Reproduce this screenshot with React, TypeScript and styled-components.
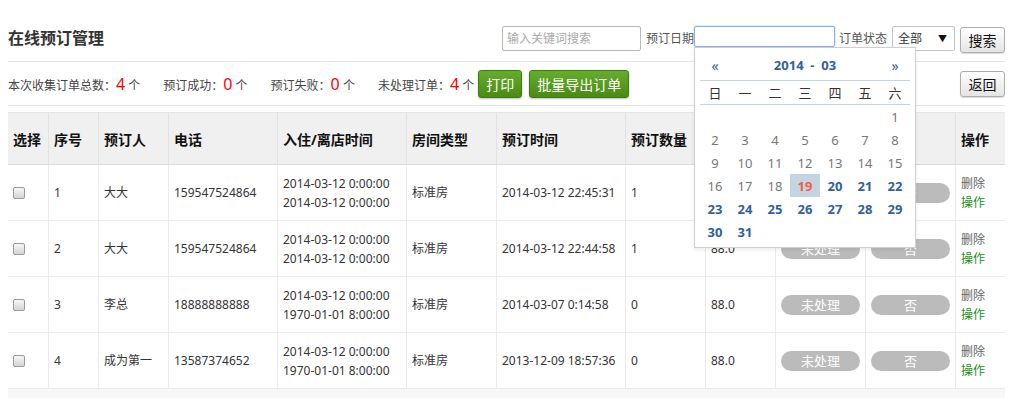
import React from "react";
import styled, {createGlobalStyle} from "styled-components";

const GlobalStyle = createGlobalStyle`
  * { box-sizing: border-box; }
  body {
    margin: 0;
    background: #fff;
    color: #333;
    font-family: "Noto Sans", "Noto Sans CJK SC", sans-serif;
    font-size: 12px;
  }
`;

const Page = styled.div`
  width: 997px;
  margin-left: 8px;
`;

const TopBar = styled.div`
  display: flex;
  align-items: flex-start;
  height: 62px;
  padding-top: 26px;
  border-bottom: 1px solid #e6e6e6;
`;

const Title = styled.h1`
  margin: 0 auto 0 0;
  font-size: 16px;
  line-height: 25px;
  font-weight: bold;
  color: #333;
`;

const SearchInput = styled.input`
  width: 139px;
  height: 25px;
  padding: 0 4px;
  border: 1px solid #b9b9b9;
  border-radius: 2px;
  font: inherit;
  font-size: 12px;
  &::placeholder { color: #a9a9a9; }
`;

const Label = styled.span<{ $gap: number }>`
  margin-left: ${p => p.$gap}px;
  line-height: 25px;
  color: #555;
  white-space: nowrap;
`;

const DateField = styled.div`
  position: relative;
`;

const DateInput = styled.input`
  display: block;
  width: 141px;
  height: 21px;
  border: 1px solid #86aee8;
  border-radius: 2px;
  outline: none;
  box-shadow: 0 0 2px rgba(82, 136, 220, 0.5);
`;

const SelectBox = styled.div`
  position: relative;
  margin-left: 5px;
`;

const StatusSelect = styled.select`
  appearance: none;
  width: 63px;
  height: 25px;
  padding: 0 5px;
  border: 1px solid #c4c4c4;
  border-radius: 2px;
  background: #fff;
  font: inherit;
  font-size: 12px;
  color: #333;
`;

const Arrow = styled.span`
  position: absolute;
  right: 8px;
  top: 6px;
  font-size: 9px;
  color: #111;
  pointer-events: none;
`;

const GreyButton = styled.button<{ $top?: number }>`
  margin-left: ${p => (p.$top ? 5 : 0)}px;
  margin-top: ${p => p.$top ?? 0}px;
  width: 45px;
  height: 26px;
  padding: 0;
  border: 1px solid #adadad;
  border-radius: 3px;
  background: linear-gradient(#ffffff, #e4e4e4);
  box-shadow: 0 1px 1px rgba(0, 0, 0, 0.15);
  font-family: inherit;
  font-size: 14px;
  color: #111;
`;

const StatsBar = styled.div`
  display: flex;
  align-items: center;
  height: 44px;
  border-bottom: 1px solid #e6e6e6;
`;

const Stat = styled.span`
  margin-right: 23px;
  color: #444;
  white-space: nowrap;
  &:last-of-type { margin-right: 4px; }
`;

const Num = styled.em`
  font-style: normal;
  font-size: 16px;
  color: #f00;
`;

const GreenButton = styled.button`
  height: 28px;
  margin-right: 7px;
  padding: 0 7px;
  border: 1px solid #3f7b10;
  border-radius: 3px;
  background: linear-gradient(#66ad2c, #4a8a14);
  box-shadow: 0 1px 2px rgba(0, 0, 0, 0.25);
  font-family: inherit;
  font-size: 14px;
  color: #fff;
`;

const Spacer = styled.div`
  flex: 1;
`;

const Table = styled.table`
  width: 997px;
  margin-top: 6px;
  table-layout: fixed;
  border-collapse: separate;
  border-spacing: 0;
  border-top: 1px solid #e6e6e6;
`;

const Col = styled.col<{ $w: number }>`
  width: ${p => p.$w}px;
`;

const HeadRow = styled.tr`
  height: 52px;
  background: #f0f0f0;
`;

const HeadCell = styled.th`
  padding: 0 5px;
  text-align: left;
  font-size: 14px;
  font-weight: bold;
  color: #111;
  white-space: nowrap;
  overflow: hidden;
  border-bottom: 1px solid #dadada;
  & + & { border-left: 1px solid #e2e2e2; }
`;

const Row = styled.tr`
  height: 56px;
`;

const Cell = styled.td`
  padding: 0 5px;
  vertical-align: middle;
  color: #333;
  line-height: 19px;
  white-space: nowrap;
  border-bottom: 1px solid #ebebeb;
  & + & { border-left: 1px solid #ebebeb; }
`;

const Check = styled.input`
  appearance: none;
  display: block;
  width: 12px;
  height: 12px;
  margin: 0;
  border: 1px solid #9a9a9a;
  border-radius: 2px;
  background: linear-gradient(#f6f6f6, #d4d4d4);
`;

const Pill = styled.span`
  display: block;
  width: 79px;
  height: 20px;
  line-height: 20px;
  border-radius: 10px;
  background: #bbbbbb;
  color: #fff;
  text-align: center;
  font-size: 13px;
`;

const ActionLink = styled.a<{ $green?: boolean }>`
  display: block;
  color: ${p => (p.$green ? "#17901a" : "#666")};
  text-decoration: none;
`;

const Footer = styled.div`
  height: 20px;
  background: #f7f7f7;
`;

const Calendar = styled.div`
  position: absolute;
  top: 100%;
  left: 0;
  z-index: 5;
  width: 222px;
  padding: 4px 5px;
  border: 1px solid #cfcfcf;
  background: #fff;
  box-shadow: 0 2px 4px rgba(0, 0, 0, 0.08);
`;

const CalHead = styled.div`
  display: grid;
  grid-template-columns: 30px 150px 30px;
  height: 29px;
  padding-bottom: 2px;
  align-items: center;
  text-align: center;
  border-bottom: 1px solid #c3d5e5;
  color: #30619a;
  font-size: 13px;
  font-weight: bold;
`;

const Nav = styled.span`
  font-weight: normal;
  font-size: 14px;
`;

const Grid = styled.div<{ $line?: boolean }>`
  display: grid;
  grid-template-columns: repeat(7, 30px);
  grid-auto-rows: 23px;
  border-bottom: ${p => (p.$line ? "1px solid #c3d5e5" : "none")};
`;

const WeekDay = styled.span`
  display: flex;
  align-items: center;
  justify-content: center;
  font-size: 13px;
  color: #333;
`;

const Day = styled.span<{ $state: "past" | "today" | "future" | "blank" }>`
  display: flex;
  align-items: center;
  justify-content: center;
  font-size: 13px;
  font-weight: ${p => (p.$state === "past" ? "normal" : "bold")};
  color: ${p => (p.$state === "past" ? "#777" : p.$state === "today" ? "#f2604a" : "#30619a")};
  background: ${p => (p.$state === "today" ? "#c4d4e1" : "transparent")};
`;

type Order = {
    id: number;
    name: string;
    phone: string;
    stay: [string, string];
    room: string;
    time: string;
    count: number;
};

const orders: Order[] = [
    {id: 1, name: "大大", phone: "159547524864", stay: ["2014-03-12 0:00:00", "2014-03-12 0:00:00"], room: "标准房", time: "2014-03-12 22:45:31", count: 1},
    {id: 2, name: "大大", phone: "159547524864", stay: ["2014-03-12 0:00:00", "2014-03-12 0:00:00"], room: "标准房", time: "2014-03-12 22:44:58", count: 1},
    {id: 3, name: "李总", phone: "18888888888", stay: ["2014-03-12 0:00:00", "1970-01-01 8:00:00"], room: "标准房", time: "2014-03-07 0:14:58", count: 0},
    {id: 4, name: "成为第一", phone: "13587374652", stay: ["2014-03-12 0:00:00", "1970-01-01 8:00:00"], room: "标准房", time: "2013-12-09 18:57:36", count: 0},
];

const columns = [
    {title: "选择", w: 40},
    {title: "序号", w: 50},
    {title: "预订人", w: 70},
    {title: "电话", w: 109},
    {title: "入住/离店时间", w: 129},
    {title: "房间类型", w: 90},
    {title: "预订时间", w: 129},
    {title: "预订数量", w: 80},
    {title: "单价", w: 70},
    {title: "处理状态", w: 90},
    {title: "已付", w: 90},
    {title: "操作", w: 50},
];

const weekDays = ["日", "一", "二", "三", "四", "五", "六"];

// March 2014 starts on a Saturday, today is the 19th
const calendarDays = () => {
    const cells: { label: string; state: "past" | "today" | "future" | "blank" }[] = [];
    for (let i = 0; i < 6; i++) cells.push({label: "", state: "blank"});
    for (let d = 1; d <= 31; d++) {
        cells.push({label: String(d), state: d < 19 ? "past" : d === 19 ? "today" : "future"});
    }
    return cells;
};

const DatePicker: React.FC = () => (
    <Calendar>
        <CalHead>
            <Nav>«</Nav>
            <span>2014&nbsp; - &nbsp;03</span>
            <Nav>»</Nav>
        </CalHead>
        <Grid $line>
            {weekDays.map(w => <WeekDay key={w}>{w}</WeekDay>)}
        </Grid>
        <Grid>
            {calendarDays().map((c, i) => <Day key={i} $state={c.state}>{c.label}</Day>)}
        </Grid>
    </Calendar>
);

const App: React.FC = () => {
    return (
        <Page>
            <GlobalStyle/>
            <TopBar>
                <Title>在线预订管理</Title>
                <SearchInput placeholder="输入关键词搜索"/>
                <Label $gap={5}>预订日期</Label>
                <DateField>
                    <DateInput/>
                    <DatePicker/>
                </DateField>
                <Label $gap={4}>订单状态</Label>
                <SelectBox>
                    <StatusSelect defaultValue="all">
                        <option value="all">全部</option>
                    </StatusSelect>
                    <Arrow>▼</Arrow>
                </SelectBox>
                <GreyButton $top={1}>搜索</GreyButton>
            </TopBar>

            <StatsBar>
                <Stat>本次收集订单总数：<Num>4</Num> 个</Stat>
                <Stat>预订成功：<Num>0</Num> 个</Stat>
                <Stat>预订失败：<Num>0</Num> 个</Stat>
                <Stat>未处理订单：<Num>4</Num> 个</Stat>
                <GreenButton>打印</GreenButton>
                <GreenButton>批量导出订单</GreenButton>
                <Spacer/>
                <GreyButton>返回</GreyButton>
            </StatsBar>

            <Table>
                <colgroup>
                    {columns.map(c => <Col key={c.title} $w={c.w}/>)}
                </colgroup>
                <thead>
                <HeadRow>
                    {columns.map(c => <HeadCell key={c.title}>{c.title}</HeadCell>)}
                </HeadRow>
                </thead>
                <tbody>
                {orders.map(o => (
                    <Row key={o.id}>
                        <Cell><Check type="checkbox"/></Cell>
                        <Cell>{o.id}</Cell>
                        <Cell>{o.name}</Cell>
                        <Cell>{o.phone}</Cell>
                        <Cell>{o.stay[0]}<br/>{o.stay[1]}</Cell>
                        <Cell>{o.room}</Cell>
                        <Cell>{o.time}</Cell>
                        <Cell>{o.count}</Cell>
                        <Cell>88.0</Cell>
                        <Cell><Pill>未处理</Pill></Cell>
                        <Cell><Pill>否</Pill></Cell>
                        <Cell>
                            <ActionLink href="#">删除</ActionLink>
                            <ActionLink href="#" $green>操作</ActionLink>
                        </Cell>
                    </Row>
                ))}
                </tbody>
            </Table>
            <Footer/>
        </Page>
    );
};

export default App;
